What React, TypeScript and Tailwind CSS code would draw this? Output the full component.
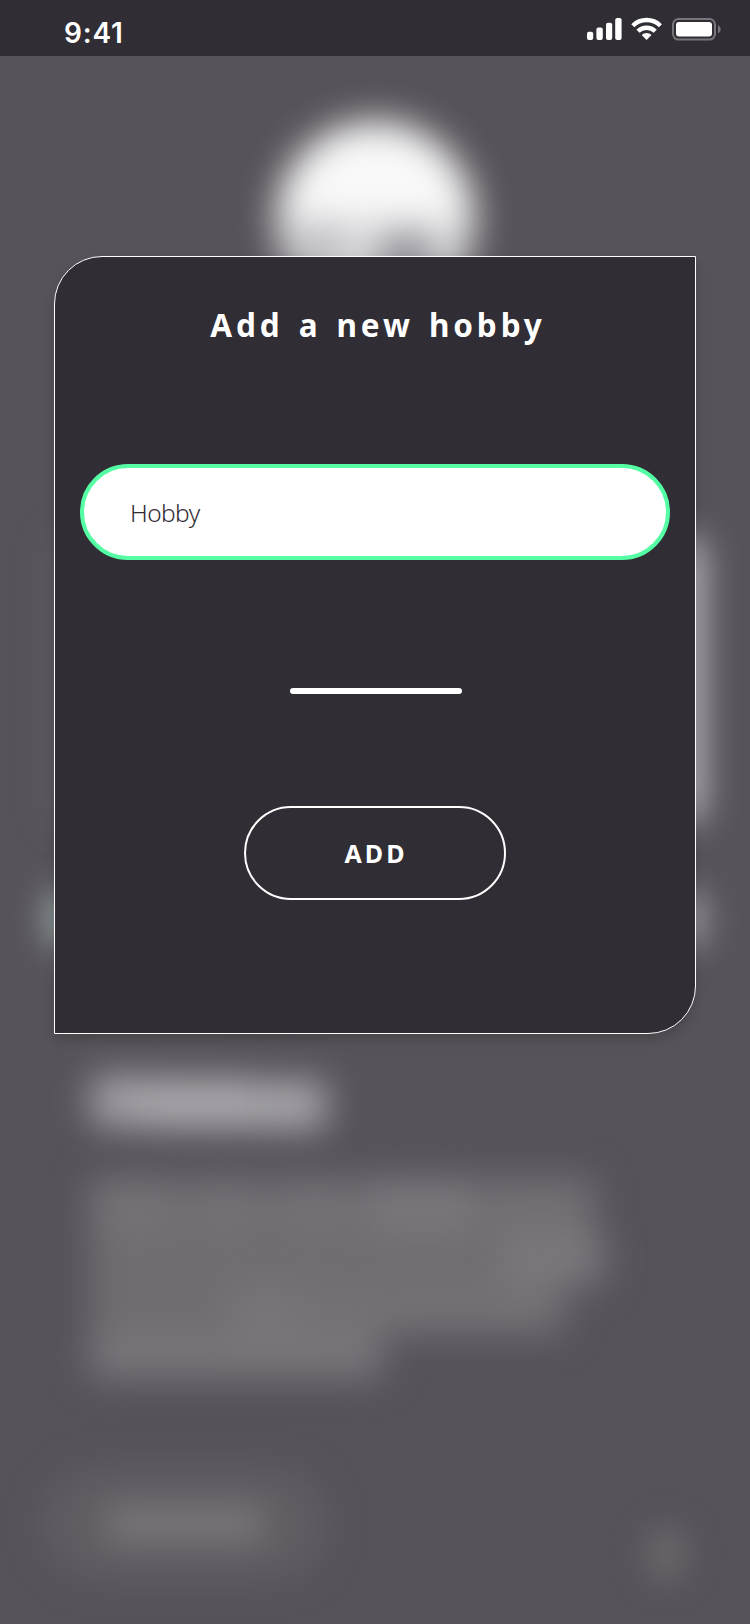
function StatusBar() {
  return (
    <header className="flex h-14 shrink-0 items-start justify-between bg-[#312d34] pl-16 pr-[28px] text-white">
      <span className="pt-[16px] font-['Inter',sans-serif] text-[28px] font-semibold leading-[34px] tracking-[0.8px]">9:41</span>
      <svg className="mt-[17px]" width="136" height="24" viewBox="586 17 136 24" fill="#fff">
        <rect x="587" y="31.7" width="6.2" height="8.3" rx="2" />
        <rect x="596.4" y="27.6" width="6.4" height="12.4" rx="2" />
        <rect x="606" y="22.8" width="6.2" height="17.2" rx="2" />
        <rect x="615.2" y="18" width="6.4" height="22" rx="2" />
        <g fill="none" stroke="#fff" strokeWidth="4.4">
          <path d="M632.8 25.7a19.6 19.6 0 0 1 27.6 0" />
          <path d="M638 31.3a12.3 12.3 0 0 1 17.2 0" />
        </g>
        <path d="M646.6 40l-4.9-5a7.2 7.2 0 0 1 9.8 0z" />
        <rect x="673" y="19" width="42" height="20.6" rx="5.5" fill="none" stroke="#77747a" strokeWidth="2" />
        <rect x="676" y="22" width="36" height="14.6" rx="3" />
        <path d="M718 25.2c3.6 1.8 3.6 6.2 0 8z" fill="#77747a" />
      </svg>
    </header>
  );
}

function Backdrop() {
  return (
    <div className="flex h-full flex-col" aria-hidden="true">
      <div className="mx-auto mt-[65px] h-[199px] w-[199px] shrink-0 overflow-hidden rounded-full bg-[#f9f9f9] blur-[18px]">
        <div className="mt-[101px] flex h-[98px] items-start gap-[36px] bg-[#d9d9db] pl-[24px]">
          <div className="h-full w-[42px] bg-[#bcbcc1]" />
          <div className="mt-2 h-full w-[56px] rounded-full bg-[#8f8d95]" />
        </div>
      </div>
      <div className="ml-[56px] mr-[48px] mt-[217px] flex h-[286px] shrink-0 justify-between blur-[18px]">
        <div className="h-full w-[5px] bg-[#77767a]" />
        <div className="h-full w-[140px] rounded-r-[16px] bg-[#c6c3c9]" />
      </div>
      <div className="ml-[50px] mr-[49px] mt-[71px] flex h-[50px] shrink-0 justify-between blur-[18px]">
        <div className="h-full w-[60px] rounded bg-[#a6bab6]" />
        <div className="h-full w-[60px] rounded bg-[#b2aeb5]" />
      </div>
      <div className="ml-[92px] mt-[132px] flex h-[54px] shrink-0 items-start blur-[18px]">
        <div className="h-[50px] w-[52px] bg-[#a5a3a8]" />
        <div className="mt-[2px] h-[50px] w-[106px] bg-[#adabb0]" />
        <div className="mt-[5px] h-[48px] w-[76px] bg-[#a9a7ac]" />
      </div>
      <div className="ml-[90px] mt-[48px] flex shrink-0 flex-col blur-[18px]">
        <div className="flex h-[56px] w-[504px] gap-1">
          <div className="h-full w-[92px] bg-[#757277]" />
          <div className="h-full w-[80px] bg-[#747176]" />
          <div className="h-full w-[88px] bg-[#747176]" />
          <div className="h-full w-[118px] bg-[#7a777c]" />
          <div className="h-full flex-1 bg-[#737075]" />
        </div>
        <div className="flex h-[50px] w-[514px]">
          <div className="h-full w-[410px] bg-[#706d72]" />
          <div className="h-full flex-1 bg-[#7b787d]" />
        </div>
        <div className="flex h-[50px] w-[474px]">
          <div className="h-full w-[140px] bg-[#706d72]" />
          <div className="h-full w-[70px] bg-[#78757a]" />
          <div className="h-full flex-1 bg-[#747176]" />
        </div>
        <div className="h-[44px] w-[292px] bg-[#79767b]" />
      </div>
      <div className="ml-[42px] mt-[90px] flex h-[112px] w-[286px] shrink-0 items-center rounded-full bg-[#5f5d62] pl-[64px] blur-[17px]">
        <div className="h-[38px] w-[158px] bg-[#79767b]" />
      </div>
      <div className="ml-[645px] mt-[-54px] h-[56px] w-[42px] shrink-0 rounded-full bg-[#68666a] blur-[15px]" />
    </div>
  );
}

function HobbyDialog() {
  return (
    <section
      role="dialog"
      className="absolute left-[54px] top-[200px] flex h-[778px] w-[642px] flex-col items-center rounded-br-[48px] rounded-tl-[48px] border border-white bg-[#312d34] px-[25px] text-white shadow-[0_6px_12px_rgba(0,0,0,0.16)]"
    >
      <h1 className="mt-[45px] pl-[6px] font-['Noto_Sans',sans-serif] text-[31.5px] font-bold leading-[46px] tracking-[3.9px] [word-spacing:3px]">
        Add a new hobby
      </h1>
      <div className="mt-[116px] flex h-24 w-[590px] shrink-0 items-center rounded-full border-4 border-[#55fda4] bg-white pl-[46px] font-['Noto_Sans',sans-serif] text-[24.5px] font-[360] tracking-[-0.6px] text-[#312d34]">
        <span className="pt-[3px]">Hobby</span>
      </div>
      <div className="ml-[2px] mt-[128px] h-[6px] w-[172px] shrink-0 rounded-[3px] bg-white" />
      <button className="mt-[112px] flex h-[94px] w-[262px] shrink-0 items-center justify-center rounded-full border-2 border-white pl-[2px] pt-[1px] font-['Noto_Sans',sans-serif] text-[25px] font-bold tracking-[3px]">
        ADD
      </button>
    </section>
  );
}

export default function App() {
  return (
    <div className="flex h-[1624px] w-[750px] flex-col overflow-hidden bg-[#57535a]">
      <StatusBar />
      <main className="relative min-h-0 flex-1">
        <Backdrop />
        <HobbyDialog />
      </main>
    </div>
  );
}
